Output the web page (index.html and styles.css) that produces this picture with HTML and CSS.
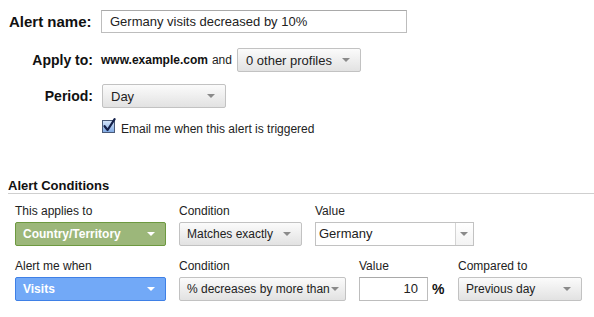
FILE: index.html
```html
<!DOCTYPE html>
<html>
<head>
<meta charset="utf-8">
<link rel="stylesheet" href="styles.css">
</head>
<body>
<div class="settings">
  <div class="row row-name">
    <label class="lbl lbl-big">Alert name:</label>
    <div class="text-input name-input">Germany visits decreased by 10%</div>
  </div>
  <div class="row row-apply">
    <label class="lbl">Apply to:</label>
    <div class="apply">
      <span class="site">www.example.com</span><span class="and">and</span>
      <div class="select sel-profiles"><span class="sel-text">0 other profiles</span><span class="arrow"></span></div>
    </div>
  </div>
  <div class="row row-period">
    <label class="lbl">Period:</label>
    <div class="select sel-period"><span class="sel-text">Day</span><span class="arrow"></span></div>
  </div>
  <div class="row row-check">
    <span class="lbl"></span>
    <div class="check">
      <svg class="checkbox" width="15" height="16" viewBox="0 0 15 16">
        <defs>
          <linearGradient id="cb" x1="0" y1="0" x2="0" y2="1">
            <stop offset="0" stop-color="#d6e6fa"/>
            <stop offset="1" stop-color="#7fa9e4"/>
          </linearGradient>
        </defs>
        <rect x="0.5" y="2.5" width="12" height="12" fill="url(#cb)" stroke="#4a5a78"/>
        <path d="M2.6 8.2 L5.6 12 L12.6 1.2" fill="none" stroke="#14204a" stroke-width="2.2" stroke-linecap="round" stroke-linejoin="round"/>
      </svg>
      <span class="check-text">Email me when this alert is triggered</span>
    </div>
  </div>
</div>

<div class="conditions">
  <h2 class="cond-title">Alert Conditions</h2>
  <div class="cond-row cond-row-1">
    <div class="col col-dim">
      <span class="col-label">This applies to</span>
      <div class="select sel-green"><span class="sel-text">Country/Territory</span><span class="arrow arrow-white"></span></div>
    </div>
    <div class="col col-cond1">
      <span class="col-label">Condition</span>
      <div class="select"><span class="sel-text">Matches exactly</span><span class="arrow"></span></div>
    </div>
    <div class="col col-val1">
      <span class="col-label">Value</span>
      <div class="combo"><span class="combo-text">Germany</span><span class="combo-btn"><span class="arrow"></span></span></div>
    </div>
  </div>
  <div class="cond-row cond-row-2">
    <div class="col col-dim">
      <span class="col-label">Alert me when</span>
      <div class="select sel-blue"><span class="sel-text">Visits</span><span class="arrow arrow-white"></span></div>
    </div>
    <div class="col col-cond2">
      <span class="col-label">Condition</span>
      <div class="select sel-tight"><span class="sel-text">% decreases by more than</span><span class="arrow"></span></div>
    </div>
    <div class="col col-val2">
      <span class="col-label">Value</span>
      <div class="val-wrap"><div class="text-input num-input">10</div><span class="pct">%</span></div>
    </div>
    <div class="col col-cmp">
      <span class="col-label">Compared to</span>
      <div class="select"><span class="sel-text">Previous day</span><span class="arrow"></span></div>
    </div>
  </div>
</div>
</body>
</html>
```

FILE: styles.css
```css
* { box-sizing: border-box; }
html, body { margin: 0; padding: 0; background: #fff; }
body {
  font-family: "Liberation Sans", Arial, sans-serif;
  color: #222;
  font-size: 12px;
  width: 594px;
  height: 317px;
  overflow: hidden;
}
.settings { padding-top: 10px; }
.row {
  display: grid;
  grid-template-columns: 93px auto;
  column-gap: 8px;
  align-items: center;
}
.row-apply { margin-top: 15px; }
.row-period { margin-top: 12px; }
.row-check { margin-top: 12px; }
.lbl {
  text-align: right;
  font-weight: bold;
  font-size: 14px;
  color: #111;
}
.lbl-big { font-size: 15px; text-align: left; padding-left: 9px; }
.text-input {
  height: 23px;
  border: 1px solid #bdbdbd;
  border-top-color: #a9a9a9;
  background: #fff;
  font-size: 13px;
  line-height: 21px;
  padding: 0 8px;
  color: #222;
}
.name-input { width: 306px; }
.apply { display: flex; align-items: center; }
.site { font-weight: bold; font-size: 12px; color: #111; }
.and { margin-left: 4px; font-size: 12px; margin-right: 5px; }
.select {
  position: relative;
  height: 24px;
  border: 1px solid #c2c2c2;
  border-radius: 2px;
  background: linear-gradient(#fbfbfb, #e2e2e2);
  display: flex;
  align-items: center;
  padding: 0 22px 0 7px;
  font-size: 12px;
  color: #222;
  white-space: nowrap;
}
.sel-profiles { width: 124px; font-size: 13px; padding-left: 8px; }
.sel-period { width: 124px; margin-left: 1px; font-size: 13px; padding-left: 8px; }
.arrow {
  position: absolute;
  right: 10px;
  top: 50%;
  margin-top: -2px;
  width: 0; height: 0;
  border-left: 4px solid transparent;
  border-right: 4px solid transparent;
  border-top: 4px solid #8a8a8a;
}
.arrow-white { border-top-color: #fff; }
.check { display: flex; align-items: flex-end; margin-left: 1px; }
.checkbox { display: block; margin-top: -3px; }
.check-text { margin-left: 4px; font-size: 12px; line-height: 14px; color: #222; position: relative; top: 2px; }

.conditions { margin-top: 45px; }
.cond-title {
  margin: 0 0 0 8px;
  font-size: 13px;
  font-weight: bold;
  line-height: 14px;
  border-bottom: 1px solid #cfcfcf;
  color: #111;
  padding-bottom: 0;
}
.cond-row {
  display: flex;
  column-gap: 13px;
  padding-left: 15px;
}
.cond-row-1 { margin-top: 10px; }
.cond-row-2 { margin-top: 13px; }
.col { display: flex; flex-direction: column; }
.col-label { font-size: 12px; line-height: 14px; margin-bottom: 4px; color: #222; }
.col-dim { width: 151px; }
.col-cond1 { width: 123px; }
.col-val1 { width: 159px; }
.col-cond2 { width: 167px; }
.col-val2 { width: 86px; }
.col-cmp { width: 124px; }
.sel-green {
  background: #9cb77a;
  border: 1px solid #6d9940;
  color: #fff;
  font-weight: bold;
}
.sel-blue {
  background: #72a9f7;
  border: 1px solid #3f80e6;
  color: #fff;
  font-weight: bold;
}
.sel-tight { padding-left: 7px; padding-right: 14px; }
.sel-tight .arrow { right: 6px; }
.combo {
  display: flex;
  height: 24px;
  border: 1px solid #c2c2c2;
  background: #fff;
}
.combo-text { flex: 1; font-size: 13px; line-height: 22px; padding-left: 3px; }
.combo-btn {
  position: relative;
  width: 18px;
  border-left: 1px solid #d4d4d4;
  background: linear-gradient(#fff, #f3f3f3);
}
.combo-btn .arrow { right: 5px; }
.val-wrap { display: flex; align-items: center; }
.num-input { width: 69px; height: 24px; text-align: right; padding-right: 9px; line-height: 22px; }
.pct { font-weight: bold; font-size: 14px; margin-left: 4px; color: #111; }
```
